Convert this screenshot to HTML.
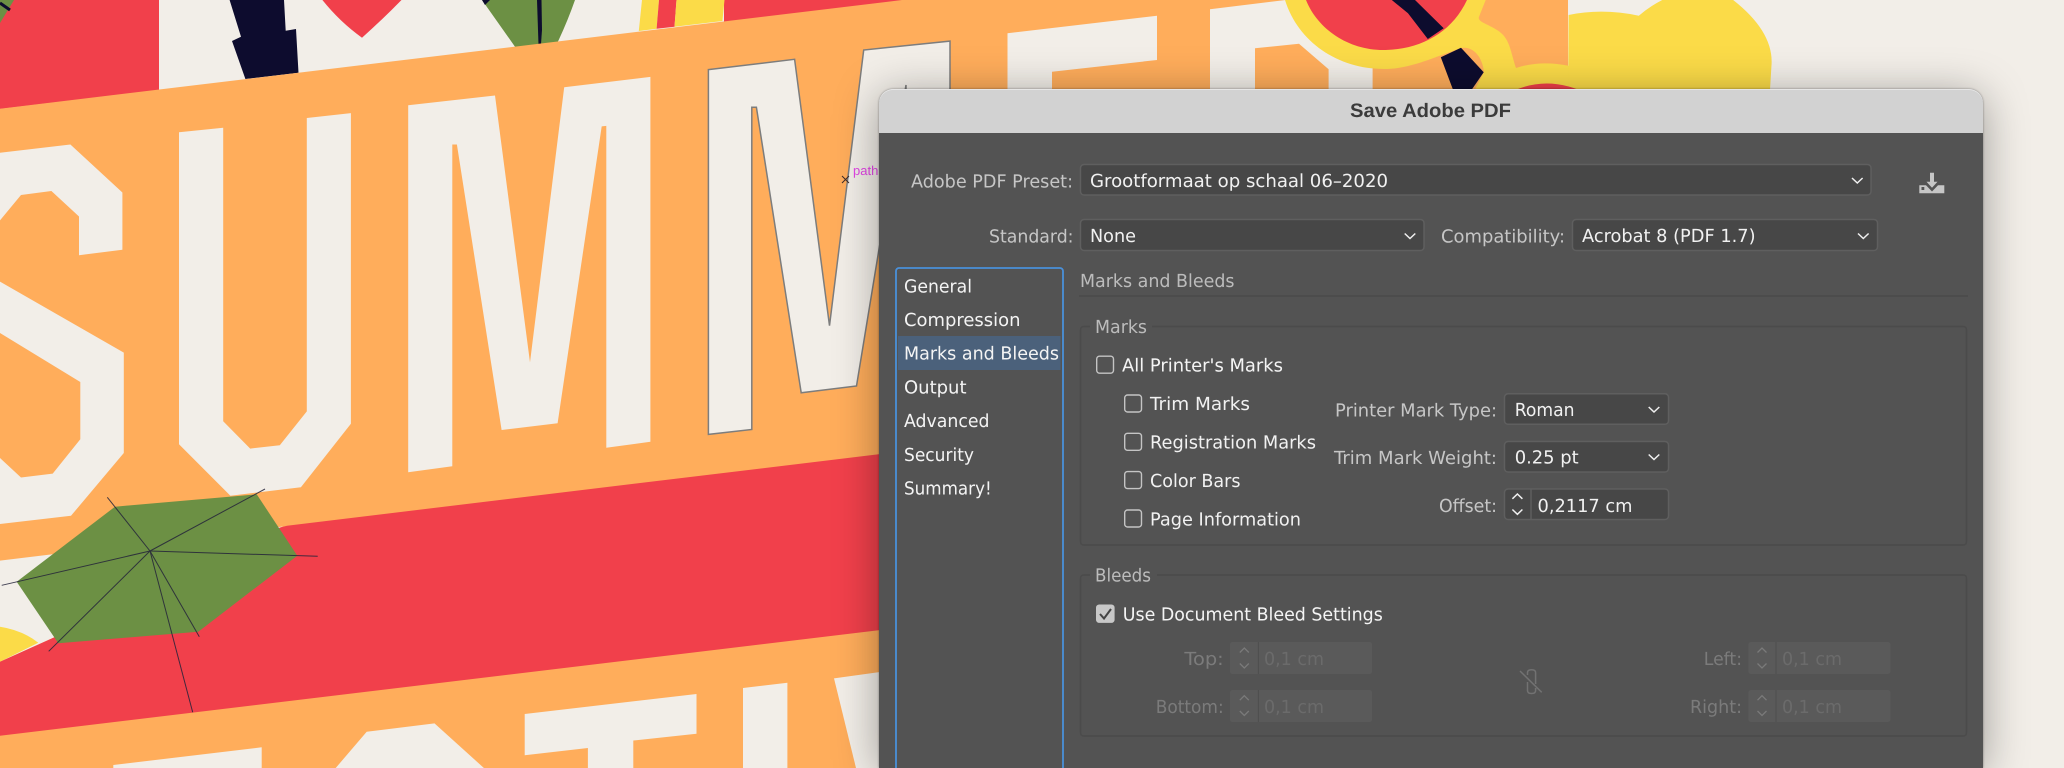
<!DOCTYPE html>
<html><head><meta charset="utf-8"><title>Save Adobe PDF</title>
<style>
html,body{margin:0;padding:0;width:2064px;height:768px;overflow:hidden;background:#f2eee8}
#wrap{position:absolute;left:0;top:0;width:2064px;height:768px;overflow:hidden}
svg{position:absolute;left:0;top:0}
#dlg{position:absolute;left:879px;top:89px;width:1104px;height:679px;border-radius:14px 14px 0 0;background:#535353;box-shadow:0 6px 44px rgba(0,0,0,.36),0 0 2px rgba(0,0,0,.4)}
#bar{position:absolute;left:0;top:0;width:100%;height:44px;background:#d2d2d2;border-radius:14px 14px 0 0;box-shadow:inset 0 1px 0 #e6e6e6}
text{font-family:"DejaVu Sans","Liberation Sans",sans-serif;font-size:18px;text-rendering:geometricPrecision}
.l{fill:#c6c6c6}.v{fill:#f1f1f1}.w{fill:#f4f4f4}.h{fill:#bcbcbc}.d{fill:#7b7b7b}.e{fill:#6b6b6b}
.sel{fill:#474747;stroke:#5f5f5f;stroke-width:1.5}
.grp{fill:none;stroke:#4b4b4b;stroke-width:1.5}
.cb{fill:none;stroke:#c4c4c4;stroke-width:1.4}
.ch{fill:none;stroke:#f0f0f0;stroke-width:1.5}
.dc{fill:none;stroke:#7a7a7a;stroke-width:1.3}
.df{fill:#5a5a5a}
</style></head><body><div id="wrap">
<svg width="2064" height="768" viewBox="0 0 2064 768">
<rect width="2064" height="768" fill="#f2eee8"/>
<!-- top band colours -->
<polygon points="0,0 159,0 159,90 0,109" fill="#f1404b"/>
<polygon points="724,0 905,0 724,22" fill="#f1404b"/>
<polygon points="0,0 14,0 0,23" fill="#6c9044"/>
<line x1="0" y1="3" x2="10" y2="10" stroke="#0d0c2e" stroke-width="3"/>
<polygon points="229.6,0 241,36.7 232,41 245.4,79 298.5,72.7 296,29 285.7,30.7 284,0" fill="#0d0c2e"/>
<path d="M322.4,0 Q340,22 362,37.7 Q384,18 401.5,0Z" fill="#f1404b"/>
<path d="M482,0 L515,46.7 Q525,58 539.3,68.3 Q552,55 558.7,40 Q568,20 575,0Z" fill="#6c9044"/>
<polygon points="482,0 490,0 485,5" fill="#0d0c2e"/>
<polygon points="537,0 541.5,0 542,30 539.3,68 538,30" fill="#0d0c2e"/>
<polygon points="642,0 659,0 656.6,28.7 638.8,31" fill="#fbdb48"/>
<polygon points="659,0 676.5,0 674.5,26.7 656.6,28.7" fill="#f1404b"/>
<polygon points="676.5,0 724.5,0 722.4,21 674.5,26.7" fill="#fbdb48"/>
<!-- orange panel -->
<polygon points="0,108.7 902,0 1568,0 1568,768 0,768" fill="#ffad5b"/>
<!-- cream strip & red band -->
<polygon points="0,560.6 283,526.5 55,637 0,661.7" fill="#f2eee8"/>
<path d="M0,626.7 Q22,630 38.3,642.7 L0,661.7Z" fill="#fbdb48"/>
<polygon points="0,661.7 55,637 280,527.5 287,525.7 1568,371 1568,547.5 0,735.7" fill="#f1404b"/>
<!-- SUMM letters -->
<g fill="#f2eee8">
<polygon points="0,152.8 70.4,144.5 122.4,192.5 122.4,249.8 79,255.2 79,216.5 51.4,191 21,195 0,220.4"/>
<polygon points="0,281.6 123.8,352.6 123.8,453 71,515.8 0,524 0,458 21,477.5 52.7,473.6 80.3,439.3 80.3,382 0,333"/>
<polygon points="179,132.2 223.2,127.8 223.2,421.2 250.2,448.6 279.8,445.2 306.8,411.4 306.8,118 350.9,113.1 350.9,423.7 300.9,487.3 230.4,495.7 179,444.2"/>
<polygon points="408.2,105.3 495,95.5 530,362.4 564.2,87.2 650.4,76.9 650.4,441.8 606.3,447.7 606.3,125.9 601.7,126.4 557.6,423.2 501.6,430 456.9,144.5 452.3,144.5 452.3,466.3 408.2,472.2"/>
<polygon points="708.4,69.6 794.6,59.3 829.5,325.7 863.7,50 950,41.1 950,400 906,400 906,85 856.5,386 801.2,392.8 756.4,107.3 751.8,107.3 751.8,429.5 708.4,434.4" stroke="#7d7d7d" stroke-width="1.5"/>
<!-- E -->
<polygon points="1007.5,33.3 1157,15.7 1157,60 1052,71.7 1052,95 1007.5,95"/>
<!-- R -->
<polygon points="1210,9.3 1285.7,0 1400,0 1400,95 1210,95"/>
<!-- bottom row letters -->
<polygon points="113.3,765 261.7,747.3 261.7,768 113.3,768"/>
<polygon points="335.7,768 366.7,731.7 434.5,723.4 483.9,768"/>
<polygon points="524.7,714 696.5,694 696.5,733.7 633.3,740.5 633.3,768 587.9,768 587.9,748 524.7,755.3"/>
<polygon points="743,688 787.4,682.8 787.4,768 743,768"/>
<polygon points="834,678.4 880,672 880,768 856,768"/>
</g>
<polygon points="1255,48.3 1299,43.7 1328.6,69.3 1328.6,95 1255,95" fill="#ffad5b"/>
<polygon points="1372.6,60 1500,0 1500,95 1372.6,95" fill="#ffad5b"/>
<!-- sunglasses & blob -->
<path d="M1568.6,15 Q1602,8 1638.8,15.7 Q1655,2 1673.5,-5 L1726.5,-5 Q1775,30 1771.4,66.7 L1769.4,100 L1568,100Z" fill="#fbdb48"/>
<path d="M1285,0 C1298,42 1338,69 1384,69 C1410,69 1432,58 1461,48 C1472,46 1482,55 1484,72 L1472,95 L1568.6,95 L1568.6,65.7 Q1540,60 1516,68 C1510,50 1510,38 1497,30 C1488,24 1478,22 1478.8,17.3 L1485.7,0Z" fill="#fbdb48"/>
<path d="M1306,0 C1318,30 1350,51 1385.7,50 C1422,49 1452,32 1467,0Z" fill="#f1404b"/>
<polygon points="1391.8,0 1415,0 1443.7,28.3 1427.8,39 1408,13.3" fill="#0d0c2e"/>
<polygon points="1440.8,57.3 1461,47.7 1483.7,72.3 1472,89.3 1455,95" fill="#0d0c2e"/>
<path d="M1505,95 Q1546,72 1590,95Z" fill="#f1404b"/>
<!-- umbrella leaf -->
<polygon points="115,506.7 256.7,494.3 297.3,555.7 198.3,631.7 58.3,643.3 16.7,581.7" fill="#6c9044"/>
<g stroke="#24233a" stroke-width="1" fill="none" opacity=".85">
<line x1="150" y1="551" x2="107.3" y2="497.3"/>
<line x1="150" y1="551" x2="265" y2="489"/>
<line x1="150" y1="551" x2="317.7" y2="556.3"/>
<line x1="150" y1="551" x2="199.3" y2="636.7"/>
<line x1="150" y1="551" x2="192.7" y2="712.3"/>
<line x1="150" y1="551" x2="48.7" y2="651.3"/>
<line x1="150" y1="551" x2="1.7" y2="585.3"/>
</g>
<g stroke="#3a2a2a" stroke-width="1"><line x1="842" y1="176" x2="849" y2="183"/><line x1="849" y1="176" x2="842" y2="183"/></g>
<text x="853" y="175" style="font-family:'Liberation Sans',sans-serif;font-size:13px" fill="#e245e6">path</text>
</svg>

<div id="dlg"><div id="bar"></div></div>

<svg width="2064" height="768" viewBox="0 0 2064 768">
<text x="1350" y="117" textLength="161" lengthAdjust="spacingAndGlyphs" style="font-family:'Liberation Sans',sans-serif;font-weight:bold;font-size:19.5px" fill="#3b3b3b">Save Adobe PDF</text>

<!-- top rows -->
<text class="l" x="911" y="187.7" textLength="162" lengthAdjust="spacingAndGlyphs">Adobe PDF Preset:</text>
<rect class="sel" x="1080.5" y="164.5" width="790.5" height="30.5" rx="3.5"/>
<text class="v" x="1090" y="187" textLength="298" lengthAdjust="spacingAndGlyphs">Grootformaat op schaal 06–2020</text>
<polyline class="ch" points="1852,178 1857.3,183 1862.6,178"/>
<!-- save icon -->
<path d="M1919.3,185.3H1926L1932,191.5L1938,185.3H1944.3V193.3H1919.3Z" fill="#c6c6c6"/>
<rect x="1921.5" y="187" width="2.8" height="3" fill="#535353"/>
<path d="M1930,172.7H1934V181.7H1937.5L1932,187.8L1926.5,181.7H1930Z" fill="#c6c6c6"/>

<text class="l" x="989" y="242.7" textLength="84.5" lengthAdjust="spacingAndGlyphs">Standard:</text>
<rect class="sel" x="1080.5" y="219.5" width="343.5" height="31" rx="3.5"/>
<text class="v" x="1090" y="242.2" textLength="46" lengthAdjust="spacingAndGlyphs">None</text>
<polyline class="ch" points="1404.7,233.5 1410,238.5 1415.3,233.5"/>
<text class="l" x="1441" y="242.7" textLength="124" lengthAdjust="spacingAndGlyphs">Compatibility:</text>
<rect class="sel" x="1572.5" y="219.5" width="305" height="31" rx="3.5"/>
<text class="v" x="1582" y="242.2" textLength="173.5" lengthAdjust="spacingAndGlyphs">Acrobat 8 (PDF 1.7)</text>
<polyline class="ch" points="1858,233.5 1863.3,238.5 1868.6,233.5"/>

<!-- list box -->
<rect x="896" y="268" width="167" height="520" rx="3" fill="none" stroke="#4a90d9" stroke-width="1.8"/>
<rect x="898" y="336" width="162.6" height="34" fill="#4b617b"/>
<text class="w" x="904" y="292.3" textLength="68" lengthAdjust="spacingAndGlyphs">General</text>
<text class="w" x="904" y="326" textLength="116.5" lengthAdjust="spacingAndGlyphs">Compression</text>
<text class="w" x="904" y="359.7" textLength="155" lengthAdjust="spacingAndGlyphs">Marks and Bleeds</text>
<text class="w" x="904" y="393.4" textLength="62.5" lengthAdjust="spacingAndGlyphs">Output</text>
<text class="w" x="904" y="427.1" textLength="85.5" lengthAdjust="spacingAndGlyphs">Advanced</text>
<text class="w" x="904" y="460.8" textLength="70" lengthAdjust="spacingAndGlyphs">Security</text>
<text class="w" x="904" y="494.5" textLength="87.7" lengthAdjust="spacingAndGlyphs">Summary!</text>

<!-- heading -->
<text class="h" x="1080" y="287" textLength="154.5" lengthAdjust="spacingAndGlyphs">Marks and Bleeds</text>
<line x1="1079" y1="296" x2="1968" y2="296" stroke="#4b4b4b" stroke-width="1.5"/>

<!-- marks group -->
<path class="grp" d="M1090,326.5H1084Q1080.5,326.5 1080.5,330V541.5Q1080.5,545 1084,545H1963Q1966.5,545 1966.5,541.5V330Q1966.5,326.5 1963,326.5H1152"/>
<text class="h" x="1095" y="333" textLength="52" lengthAdjust="spacingAndGlyphs">Marks</text>
<rect class="cb" x="1096.7" y="356.2" width="16.8" height="17" rx="2.8"/>
<text class="w" x="1122" y="371.7" textLength="161" lengthAdjust="spacingAndGlyphs">All Printer's Marks</text>
<rect class="cb" x="1124.7" y="395" width="16.8" height="17" rx="2.8"/>
<text class="v" x="1150" y="410" textLength="100" lengthAdjust="spacingAndGlyphs">Trim Marks</text>
<rect class="cb" x="1124.7" y="433.3" width="16.8" height="17" rx="2.8"/>
<text class="v" x="1150" y="448.5" textLength="166" lengthAdjust="spacingAndGlyphs">Registration Marks</text>
<rect class="cb" x="1124.7" y="471.6" width="16.8" height="17" rx="2.8"/>
<text class="v" x="1150" y="487" textLength="90.5" lengthAdjust="spacingAndGlyphs">Color Bars</text>
<rect class="cb" x="1124.7" y="510" width="16.8" height="17" rx="2.8"/>
<text class="v" x="1150" y="525.7" textLength="151" lengthAdjust="spacingAndGlyphs">Page Information</text>

<text class="l" x="1335" y="416.7" textLength="162" lengthAdjust="spacingAndGlyphs">Printer Mark Type:</text>
<rect class="sel" x="1504.5" y="393.8" width="164" height="30.5" rx="3.5"/>
<text class="v" x="1514.7" y="416" textLength="59.8" lengthAdjust="spacingAndGlyphs">Roman</text>
<polyline class="ch" points="1648.7,407 1654,412 1659.3,407"/>
<text class="l" x="1334" y="464" textLength="163" lengthAdjust="spacingAndGlyphs">Trim Mark Weight:</text>
<rect class="sel" x="1504.5" y="441.5" width="164" height="30.5" rx="3.5"/>
<text class="v" x="1514.7" y="463.7" textLength="64" lengthAdjust="spacingAndGlyphs">0.25 pt</text>
<polyline class="ch" points="1648.7,454.5 1654,459.5 1659.3,454.5"/>
<text class="l" x="1439" y="512" textLength="58" lengthAdjust="spacingAndGlyphs">Offset:</text>
<rect class="sel" x="1504.5" y="489" width="164" height="30.5" rx="3.5"/>
<line x1="1531" y1="489" x2="1531" y2="519.5" stroke="#5f5f5f" stroke-width="1.5"/>
<polyline class="ch" points="1512.4,498.8 1517.4,494 1522.4,498.8"/>
<polyline class="ch" points="1512.4,509.5 1517.4,514.3 1522.4,509.5"/>
<text class="v" x="1537.5" y="512" textLength="95" lengthAdjust="spacingAndGlyphs">0,2117 cm</text>

<!-- bleeds group -->
<path class="grp" d="M1090,575H1084Q1080.5,575 1080.5,578.5V732.5Q1080.5,736 1084,736H1963Q1966.5,736 1966.5,732.5V578.5Q1966.5,575 1963,575H1157"/>
<text class="h" x="1095" y="581.3" textLength="56" lengthAdjust="spacingAndGlyphs">Bleeds</text>
<rect x="1096" y="604.5" width="18.6" height="18.4" rx="3.2" fill="#c8c8c8"/>
<polyline points="1100,614 1104,618.5 1111,609" fill="none" stroke="#444" stroke-width="2"/>
<text class="w" x="1122.8" y="620.7" textLength="260" lengthAdjust="spacingAndGlyphs">Use Document Bleed Settings</text>

<text class="d" x="1184.4" y="665" textLength="39.3" lengthAdjust="spacingAndGlyphs">Top:</text>
<rect class="df" x="1230" y="642" width="142" height="32" rx="2.5"/>
<line x1="1258.4" y1="642" x2="1258.4" y2="674" stroke="#4e4e4e" stroke-width="1"/>
<polyline class="dc" points="1239.8,652.5 1244.3,648 1248.8,652.5"/>
<polyline class="dc" points="1239.8,663.5 1244.3,668 1248.8,663.5"/>
<text class="e" x="1264" y="665" textLength="60" lengthAdjust="spacingAndGlyphs">0,1 cm</text>

<text class="d" x="1155.7" y="713" textLength="68" lengthAdjust="spacingAndGlyphs">Bottom:</text>
<rect class="df" x="1230" y="690" width="142" height="32" rx="2.5"/>
<line x1="1258.4" y1="690" x2="1258.4" y2="722" stroke="#4e4e4e" stroke-width="1"/>
<polyline class="dc" points="1239.8,700.2 1244.3,695.7 1248.8,700.2"/>
<polyline class="dc" points="1239.8,711 1244.3,715.5 1248.8,711"/>
<text class="e" x="1264" y="713" textLength="60" lengthAdjust="spacingAndGlyphs">0,1 cm</text>

<text class="d" x="1703.8" y="665" textLength="38.2" lengthAdjust="spacingAndGlyphs">Left:</text>
<rect class="df" x="1748.4" y="642" width="142" height="32" rx="2.5"/>
<line x1="1776" y1="642" x2="1776" y2="674" stroke="#4e4e4e" stroke-width="1"/>
<polyline class="dc" points="1757.5,652.5 1762,648 1766.5,652.5"/>
<polyline class="dc" points="1757.5,663.5 1762,668 1766.5,663.5"/>
<text class="e" x="1782" y="665" textLength="60" lengthAdjust="spacingAndGlyphs">0,1 cm</text>

<text class="d" x="1690" y="713" textLength="52" lengthAdjust="spacingAndGlyphs">Right:</text>
<rect class="df" x="1748.4" y="690" width="142" height="32" rx="2.5"/>
<line x1="1776" y1="690" x2="1776" y2="722" stroke="#4e4e4e" stroke-width="1"/>
<polyline class="dc" points="1757.5,700.2 1762,695.7 1766.5,700.2"/>
<polyline class="dc" points="1757.5,711 1762,715.5 1766.5,711"/>
<text class="e" x="1782" y="713" textLength="60" lengthAdjust="spacingAndGlyphs">0,1 cm</text>

<!-- broken link icon -->
<g fill="none" stroke="#727272" stroke-width="1.5">
<path d="M1527.5,675V672.5Q1527.5,669.7 1531.5,669.7Q1535.6,669.7 1535.6,672.5V684"/>
<path d="M1527.5,682V690.5Q1527.5,693.5 1531.5,693.5Q1535.6,693.5 1535.6,690.5V688"/>
<line x1="1520" y1="671" x2="1541.7" y2="692.3"/>
</g>
</svg>
</div></body></html>
